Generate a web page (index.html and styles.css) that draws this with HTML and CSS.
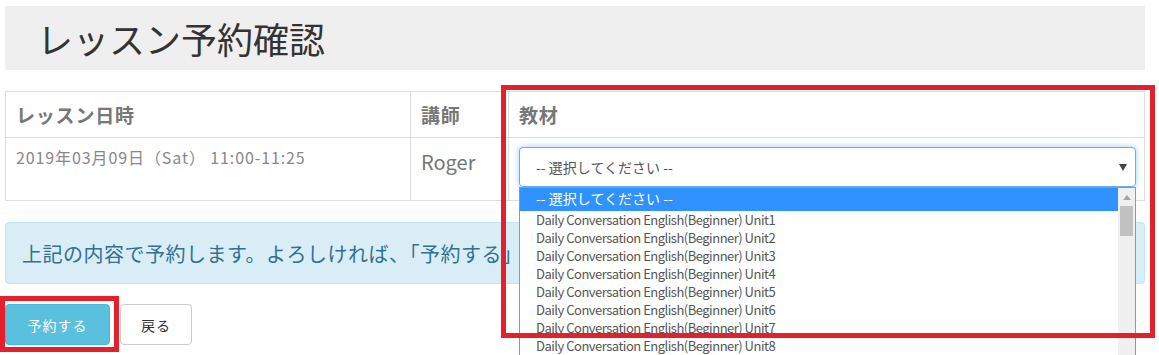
FILE: index.html
```html
<!DOCTYPE html>
<html lang="ja">
<head>
<meta charset="utf-8">
<title>レッスン予約確認</title>
<link rel="stylesheet" href="styles.css">
</head>
<body>
<div class="page">
  <div class="page-header"><h1>レッスン予約確認</h1></div>

  <table class="table">
    <thead>
      <tr>
        <th class="col-date">レッスン日時</th>
        <th class="col-teacher">講師</th>
        <th class="col-material">教材</th>
      </tr>
    </thead>
    <tbody>
      <tr>
        <td class="cell-date">2019年03月09日（Sat） 11:00-11:25</td>
        <td class="cell-teacher">Roger</td>
        <td class="cell-material">
          <div class="select-wrap">
            <div class="select">
              <span class="select-value">-- 選択してください --</span>
              <span class="select-arrow"></span>
            </div>
            <div class="dropdown">
              <ul class="options">
                <li class="option selected">-- 選択してください --</li>
                <li class="option">Daily Conversation English(Beginner) Unit1</li>
                <li class="option">Daily Conversation English(Beginner) Unit2</li>
                <li class="option">Daily Conversation English(Beginner) Unit3</li>
                <li class="option">Daily Conversation English(Beginner) Unit4</li>
                <li class="option">Daily Conversation English(Beginner) Unit5</li>
                <li class="option">Daily Conversation English(Beginner) Unit6</li>
                <li class="option">Daily Conversation English(Beginner) Unit7</li>
                <li class="option">Daily Conversation English(Beginner) Unit8</li>
              </ul>
              <div class="scrollbar">
                <span class="scroll-up"></span>
                <span class="scroll-thumb"></span>
              </div>
            </div>
          </div>
        </td>
      </tr>
    </tbody>
  </table>

  <div class="alert">上記の内容で予約します。よろしければ、「予約する」ボタンを押してください。</div>

  <div class="actions">
    <button class="btn btn-info">予約する</button>
    <button class="btn btn-default">戻る</button>
  </div>
</div>

<div class="mark mark-material"></div>
<div class="mark mark-submit"></div>
</body>
</html>
```

FILE: styles.css
```css
html, body {
  margin: 0;
  padding: 0;
  overflow: hidden;
  background: #fff;
}

body {
  position: relative;
  width: 1159px;
  height: 355px;
  font-family: "Noto Sans CJK JP", "Noto Sans", sans-serif;
  color: #333;
}

.page {
  width: 1140px;
  padding: 6px 0 0 5px;
}

.page-header {
  height: 64px;
  background: #efefef;
  display: flex;
  align-items: center;
  padding-left: 32px;
}

.page-header h1 {
  margin: 0;
  font-size: 36px;
  font-weight: normal;
  line-height: 1;
  color: #333;
}

.table {
  margin-top: 21px;
  width: 1140px;
  border-collapse: collapse;
  table-layout: fixed;
}

.table th,
.table td {
  border: 1px solid #ddd;
  text-align: left;
  padding: 0 10px;
}

.table th {
  height: 45px;
  font-size: 19px;
  letter-spacing: 0.8px;
  font-weight: bold;
  color: #777;
  vertical-align: middle;
}

.col-date { width: 384px; }
.col-teacher { width: 77px; }

.table td {
  height: 53px;
  vertical-align: top;
  padding-top: 9px;
  padding-bottom: 0;
}

.cell-date {
  font-size: 16px;
  letter-spacing: 0.9px;
  line-height: 20px;
  color: #888;
}

.cell-teacher {
  font-size: 20px;
  line-height: 30px;
  color: #777;
}

.select-wrap {
  position: relative;
  width: 617px;
}

.select {
  box-sizing: border-box;
  height: 40px;
  border: 1px solid #66afe9;
  border-radius: 4px;
  box-shadow: 0 0 6px rgba(102, 175, 233, 0.6);
  display: flex;
  align-items: center;
  justify-content: space-between;
  padding: 0 8px 0 16px;
  font-size: 14px;
  color: #555;
  background: #fff;
}

.select-arrow {
  width: 0;
  height: 0;
  border-left: 4px solid transparent;
  border-right: 4px solid transparent;
  border-top: 7px solid #444;
}

.dropdown {
  position: absolute;
  top: 40px;
  left: 0;
  width: 617px;
  height: 169px;
  box-sizing: border-box;
  border: 1px solid #7f9db9;
  border-bottom: 0;
  background: #fff;
  display: flex;
  overflow: hidden;
  z-index: 2;
}

.options {
  list-style: none;
  margin: 0;
  padding: 0;
  flex: 1;
}

.option {
  height: 18px;
  line-height: 18px;
  padding-left: 16px;
  font-size: 13px;
  letter-spacing: -0.5px;
  color: #555;
  white-space: nowrap;
}

.option.selected {
  height: 23px;
  line-height: 21px;
  letter-spacing: 0;
  font-size: 14px;
  background: #3092ff;
  color: #fff;
}

.scrollbar {
  width: 17px;
  background: #f0f0f0;
  display: flex;
  flex-direction: column;
  align-items: center;
}

.scroll-up {
  margin-top: 7px;
  width: 0;
  height: 0;
  border-left: 4px solid transparent;
  border-right: 4px solid transparent;
  border-bottom: 5px solid #a3a3a3;
}

.scroll-thumb {
  margin-top: 6px;
  width: 13px;
  height: 30px;
  background: #c1c1c1;
}

.alert {
  margin-top: 21px;
  box-sizing: border-box;
  height: 62px;
  background: #d9edf7;
  border: 1px solid #bce8f1;
  border-radius: 4px;
  color: #31708f;
  font-size: 20px;
  letter-spacing: 0.5px;
  display: flex;
  align-items: center;
  padding-left: 16px;
  white-space: nowrap;
  overflow: hidden;
}

.actions {
  margin-top: 20px;
  display: flex;
  gap: 10px;
}

.btn {
  box-sizing: border-box;
  height: 41px;
  border-radius: 4px;
  font-family: "Noto Sans CJK JP", sans-serif;
  font-size: 14px;
  letter-spacing: 1px;
  padding: 0;
}

.btn-info {
  width: 105px;
  background: #5bc0de;
  border: 1px solid #46b8da;
  color: #fff;
}

.btn-default {
  width: 72px;
  background: #fff;
  border: 1px solid #ccc;
  color: #333;
}

.mark {
  position: absolute;
  box-sizing: border-box;
  border: 5px solid #e3202b;
  z-index: 5;
}

.mark-material {
  left: 501px;
  top: 85px;
  width: 654px;
  height: 253px;
}

.mark-submit {
  left: 0;
  top: 296px;
  width: 119px;
  height: 56px;
}
```
